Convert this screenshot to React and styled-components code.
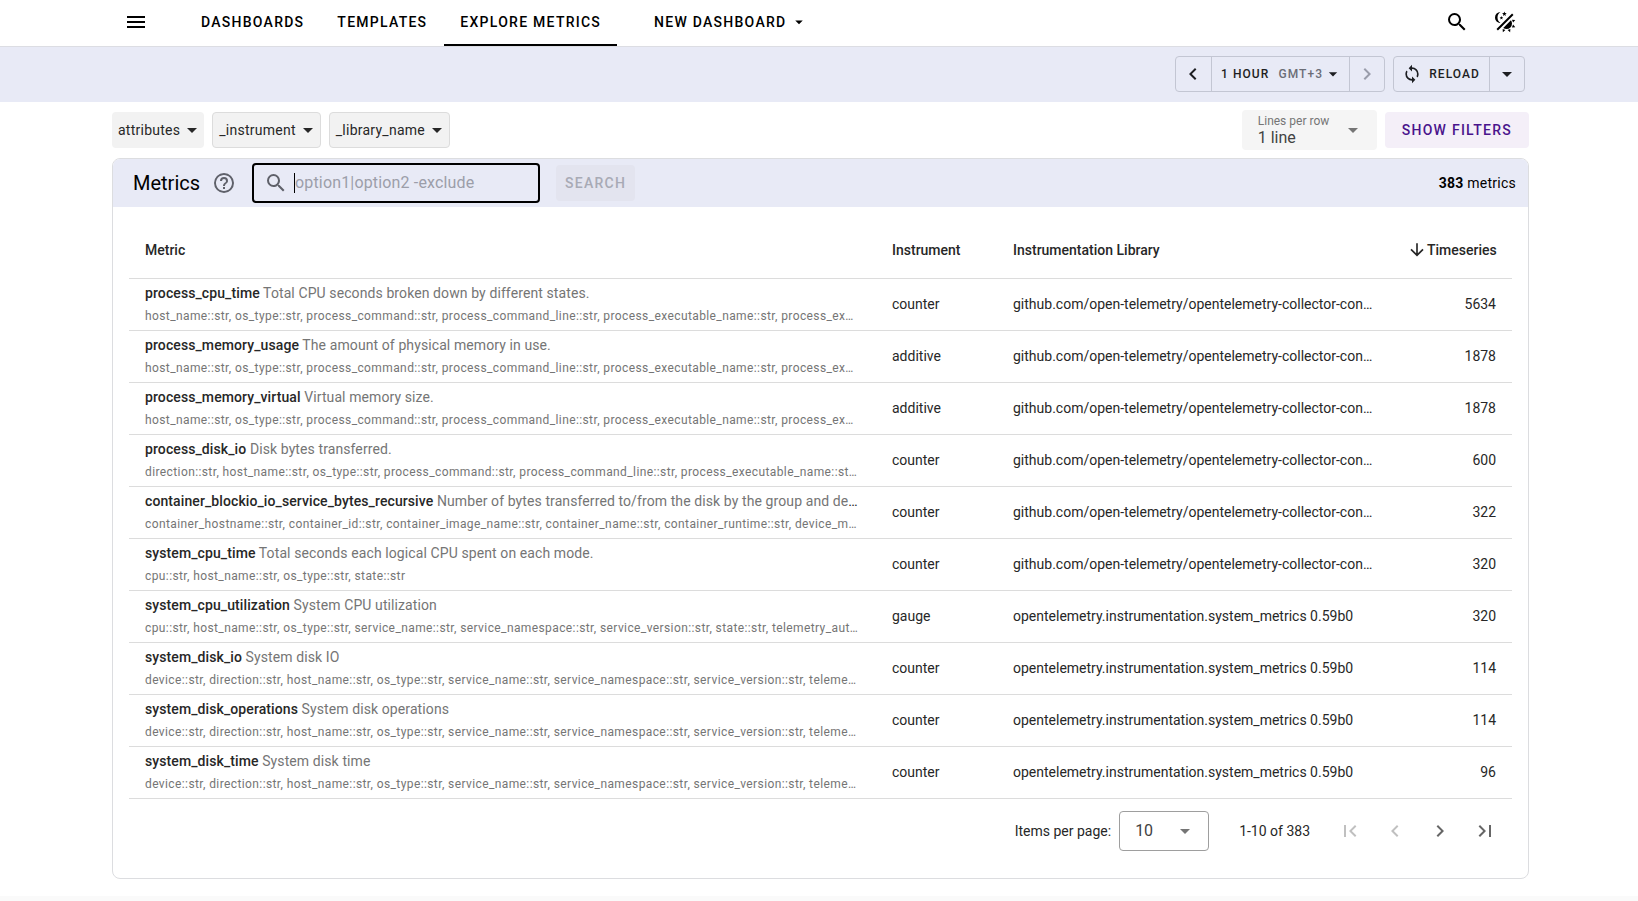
import React from 'react';
import styled, { createGlobalStyle } from 'styled-components';

const GlobalStyle = createGlobalStyle`
  *, *::before, *::after {
    box-sizing: border-box;
  }
  body {
    margin: 0;
    background: #fff;
    color: #272727;
    font-family: Roboto, sans-serif;
    font-size: 14px;
    line-height: 20px;
  }
  button, input, select {
    margin: 0;
    padding: 0;
    border: 0;
    background: none;
    color: inherit;
    font: inherit;
    letter-spacing: inherit;
  }
`

const icons = {
  menu: 'M3,6H21V8H3V6M3,11H21V13H3V11M3,16H21V18H3V16Z',
  magnify: 'M9.5,3A6.5,6.5 0 0,1 16,9.5C16,11.11 15.41,12.59 14.44,13.73L14.71,14H15.5L20.5,19L19,20.5L14,15.5V14.71L13.73,14.44C12.59,15.41 11.11,16 9.5,16A6.5,6.5 0 0,1 3,9.5A6.5,6.5 0 0,1 9.5,3M9.5,5C7,5 5,7 5,9.5C5,12 7,14 9.5,14C12,14 14,12 14,9.5C14,7 12,5 9.5,5Z',
  theme: 'M7.5,2C5.71,3.15 4.5,5.18 4.5,7.5C4.5,9.82 5.71,11.85 7.53,13C4.46,13 2,10.54 2,7.5A5.5,5.5 0 0,1 7.5,2M19.07,3.5L20.5,4.93L4.93,20.5L3.5,19.07L19.07,3.5M12.89,5.93L11.41,5L9.97,6L10.39,4.3L9,3.24L10.75,3.12L11.33,1.47L12,3.1L13.73,3.13L12.38,4.26L12.89,5.93M9.59,9.54L8.43,8.81L7.31,9.59L7.65,8.27L6.56,7.44L7.92,7.35L8.37,6.06L8.88,7.33L10.24,7.36L9.19,8.23L9.59,9.54M19,13.5A5.5,5.5 0 0,1 13.5,19C12.28,19 11.15,18.6 10.24,17.93L17.93,10.24C18.6,11.15 19,12.28 19,13.5M14.6,20.08L17.37,18.93L17.13,22.28L14.6,20.08M18.93,17.38L20.08,14.61L22.28,17.15L18.93,17.38M20.08,12.42L18.94,9.64L22.28,9.88L20.08,12.42M9.63,18.93L12.4,20.08L9.87,22.27L9.63,18.93Z',
  caret: 'M7,10L12,15L17,10H7Z',
  left: 'M15.41,16.58L10.83,12L15.41,7.41L14,6L8,12L14,18L15.41,16.58Z',
  right: 'M8.59,16.58L13.17,12L8.59,7.41L10,6L16,12L10,18L8.59,16.58Z',
  first: 'M18.41,16.59L13.82,12L18.41,7.41L17,6L11,12L17,18L18.41,16.59M6,6H8V18H6V6Z',
  last: 'M5.59,7.41L10.18,12L5.59,16.59L7,18L13,12L7,6L5.59,7.41M16,6H18V18H16V6Z',
  sync: 'M12,18A6,6 0 0,1 6,12C6,11 6.25,10.03 6.7,9.2L5.24,7.74C4.46,8.97 4,10.43 4,12A8,8 0 0,0 12,20V23L16,19L12,15M12,4V1L8,5L12,9V6A6,6 0 0,1 18,12C18,13 17.75,13.97 17.3,14.8L18.76,16.26C19.54,15.03 20,13.57 20,12A8,8 0 0,0 12,4Z',
  down: 'M11,4H13V16L18.5,10.5L19.92,11.92L12,19.84L4.08,11.92L5.5,10.5L11,16V4Z',
  help: 'M11,18H13V16H11V18M12,2A10,10 0 0,0 2,12A10,10 0 0,0 12,22A10,10 0 0,0 22,12A10,10 0 0,0 12,2M12,20C7.59,20 4,16.41 4,12C4,7.59 7.59,4 12,4C16.41,4 20,7.59 20,12C20,16.41 16.41,20 12,20M12,6A4,4 0 0,0 8,10H10A2,2 0 0,1 12,8A2,2 0 0,1 14,10C14,12 11,11.75 11,15H13C13,12.75 16,12.5 16,10A4,4 0 0,0 12,6Z',
}

const Svg = styled.svg`
  flex: none;
  display: block;
  fill: currentColor;
  pointer-events: none;
`

function Icon({ name, size = 24 }) {
  return (
    <Svg width={size} height={size} viewBox="0 0 24 24" aria-hidden="true">
      <path d={icons[name]} />
    </Svg>
  )
}

const Page = styled.div`
  display: flex;
  flex-direction: column;
  min-height: 100vh;
`

const TopBar = styled.header`
  display: flex;
  height: 47px;
  padding: 0 109px 0 112px;
  border-bottom: 1px solid #dcdde3;
  color: #000;
`

const IconButton = styled.button`
  display: flex;
  align-items: center;
  justify-content: center;
  width: 48px;
  height: 44px;
`

const Tabs = styled.nav`
  display: flex;
  flex: 1;
  gap: 1px;
  margin-left: 25px;
`

const Tab = styled.a`
  display: flex;
  align-items: center;
  padding: 0 16px;
  border-bottom: 2px solid ${props => props.$active ? '#000' : 'transparent'};
  color: #000;
  font-weight: 500;
  letter-spacing: 0.09em;
  text-decoration: none;
  text-transform: uppercase;
`

const NewDashboard = styled(Tab).attrs({ as: 'button' })`
  gap: 4px;
  margin-left: 20px;
`

const Band = styled.div`
  display: flex;
  justify-content: flex-end;
  gap: 8px;
  padding: 9px 113px 10px;
  background: #e8eaf6;
`

const Group = styled.div`
  display: flex;
  height: 36px;
  border: 1px solid #c3c6d3;
  border-radius: 4px;
`

const GroupButton = styled.button`
  display: flex;
  align-items: center;
  justify-content: center;
  min-width: 35px;
  padding: ${props => props.$pad || '0'};
  color: ${props => props.disabled ? '#9a9dab' : '#1d1e22'};
  font-size: 12px;
  font-weight: 500;
  letter-spacing: 0.09em;
  & + & {
    border-left: 1px solid #c3c6d3;
  }
`

const Zone = styled.span`
  margin-left: 9px;
  color: #6b6d76;
`

const ReloadText = styled.span`
  margin-left: 7px;
`

const Main = styled.main`
  padding: 8px 109px 17px 112px;
`

const Filters = styled.div`
  display: flex;
  align-items: center;
  gap: 8px;
`

const Chip = styled.button`
  display: flex;
  align-items: center;
  height: 36px;
  padding: 0 0 0 6px;
  border: ${props => props.$flat ? '0' : '1px solid #dcdcdc'};
  border-radius: 4px;
  background: #f2f2f2;
  letter-spacing: 0.018em;
`

const LinesField = styled.div`
  display: flex;
  align-items: center;
  width: 135px;
  height: 40px;
  margin-left: auto;
  padding: 0 12px 0 16px;
  border-radius: 4px;
  background: #f5f5f5;
  color: #757575;
`

const LinesText = styled.div`
  display: flex;
  flex-direction: column;
  flex: 1;
  min-width: 0;
  label {
    font-size: 12px;
    line-height: 15px;
  }
`

const Select = styled.select`
  flex: 1;
  min-width: 0;
  appearance: none;
  color: #424242;
  font-size: 16px;
  line-height: 18px;
`

const ShowFilters = styled.button`
  height: 36px;
  padding: 0 17px;
  border-radius: 4px;
  background: #f4eff8;
  color: #4a148c;
  font-weight: 500;
  letter-spacing: 0.09em;
`

const Card = styled.section`
  margin-top: 8px;
  border: 1px solid #dcdde0;
  border-radius: 8px;
  overflow: hidden;
`

const CardBar = styled.div`
  display: flex;
  align-items: center;
  height: 48px;
  padding: 0 12px 0 20px;
  background: #e8eaf6;
  color: #000;
`

const Title = styled.h1`
  margin: 0 12px 0 0;
  font-size: 20px;
  font-weight: 400;
`

const HelpButton = styled.button`
  color: #5f616a;
`

const SearchBox = styled.div`
  display: flex;
  align-items: center;
  gap: 6px;
  width: 288px;
  height: 40px;
  margin: 0 16px;
  padding: 0 10px;
  border: 2px solid #000;
  border-radius: 4px;
  color: #5f616a;
`

const SearchInput = styled.input`
  flex: 1;
  min-width: 0;
  height: 20px;
  border-left: 1px solid #000;
  outline: none;
  font-size: 16px;
  letter-spacing: 0.01em;
  &::placeholder {
    color: #9c9ea9;
    opacity: 1;
  }
`

const SearchButton = styled.button`
  height: 36px;
  padding: 0 9px;
  border-radius: 4px;
  background: #e3e4ef;
  color: #a8aab5;
  font-weight: 500;
  letter-spacing: 0.09em;
`

const Count = styled.div`
  margin-left: auto;
  letter-spacing: 0.018em;
`

const CardBody = styled.div`
  padding: 16px;
`

const Table = styled.table`
  width: 100%;
  table-layout: fixed;
  border-collapse: separate;
  border-spacing: 0;
`

const Th = styled.th`
  width: ${props => props.$width || 'auto'};
  height: 56px;
  padding: 0 16px 2px;
  border-bottom: 1px solid #dcdcdc;
  font-weight: 500;
  text-align: ${props => props.$end ? 'right' : 'left'};
`

const Sort = styled.button`
  display: inline-flex;
  align-items: center;
  vertical-align: middle;
`

const Td = styled.td`
  height: 52px;
  padding: 0 16px 2px;
  border-bottom: 1px solid #dcdcdc;
  overflow: hidden;
  text-align: ${props => props.$end ? 'right' : 'left'};
  text-overflow: ellipsis;
  white-space: nowrap;
`

const Name = styled.div`
  margin-bottom: 2px;
  overflow: hidden;
  text-overflow: ellipsis;
  line-height: 22px;
  letter-spacing: 0.007em;
  a {
    color: inherit;
    font-weight: 500;
    text-decoration: none;
  }
  span {
    color: #757575;
  }
`

const Attrs = styled.div`
  overflow: hidden;
  text-overflow: ellipsis;
  color: #757575;
  font-size: 12px;
  letter-spacing: 0.033em;
`

const Pager = styled.div`
  display: flex;
  align-items: center;
  justify-content: flex-end;
  padding: 12px 5px 11px;
`

const PageSize = styled.div`
  display: flex;
  align-items: center;
  width: 90px;
  height: 40px;
  margin: 0 30px 0 8px;
  padding: 0 11px 0 15px;
  border: 1px solid #9e9e9e;
  border-radius: 4px;
  color: #757575;
`

const Range = styled.span`
  margin-right: 17px;
`

const PageButton = styled.button`
  display: flex;
  justify-content: center;
  width: 45px;
  color: ${props => props.disabled ? '#c0c0c0' : '#666'};
`

const Footer = styled.footer`
  flex: 1;
  background: #fafafa;
`

const github = 'github.com/open-telemetry/opentelemetry-collector-contrib'
const system = 'opentelemetry.instrumentation.system_metrics 0.59b0'
const processAttrs = 'host_name, os_type, process_command, process_command_line, process_executable_name, process_exec'
const diskAttrs = 'device, direction, host_name, os_type, service_name, service_namespace, service_version, telemetry'

const metrics = [
  { name: 'process_cpu_time', text: 'Total CPU seconds broken down by different states.', attrs: processAttrs, instrument: 'counter', library: github, count: 5634 },
  { name: 'process_memory_usage', text: 'The amount of physical memory in use.', attrs: processAttrs, instrument: 'additive', library: github, count: 1878 },
  { name: 'process_memory_virtual', text: 'Virtual memory size.', attrs: processAttrs, instrument: 'additive', library: github, count: 1878 },
  { name: 'process_disk_io', text: 'Disk bytes transferred.', attrs: 'direction, host_name, os_type, process_command, process_command_line, process_executable_name, process_exec', instrument: 'counter', library: github, count: 600 },
  { name: 'container_blockio_io_service_bytes_recursive', text: 'Number of bytes transferred to/from the disk by the group and descend', attrs: 'container_hostname, container_id, container_image_name, container_name, container_runtime, device_major', instrument: 'counter', library: github, count: 322 },
  { name: 'system_cpu_time', text: 'Total seconds each logical CPU spent on each mode.', attrs: 'cpu, host_name, os_type, state', instrument: 'counter', library: github, count: 320 },
  { name: 'system_cpu_utilization', text: 'System CPU utilization', attrs: 'cpu, host_name, os_type, service_name, service_namespace, service_version, state, telemetry_auto', instrument: 'gauge', library: system, count: 320 },
  { name: 'system_disk_io', text: 'System disk IO', attrs: diskAttrs, instrument: 'counter', library: system, count: 114 },
  { name: 'system_disk_operations', text: 'System disk operations', attrs: diskAttrs, instrument: 'counter', library: system, count: 114 },
  { name: 'system_disk_time', text: 'System disk time', attrs: diskAttrs, instrument: 'counter', library: system, count: 96 },
]

const withTypes = attrs => attrs.split(', ').map(attr => attr + '::str').join(', ')

function MetricRow({ metric }) {
  return (
    <tr>
      <Td>
        <Name>
          <a href="#metric">{metric.name}</a> <span>{metric.text}</span>
        </Name>
        <Attrs>{withTypes(metric.attrs)}</Attrs>
      </Td>
      <Td>{metric.instrument}</Td>
      <Td>{metric.library}</Td>
      <Td $end>{metric.count}</Td>
    </tr>
  )
}

export default function App() {
  return (
    <Page>
      <GlobalStyle />
      <TopBar>
        <IconButton aria-label="Menu"><Icon name="menu" /></IconButton>
        <Tabs>
          <Tab href="#dashboards">Dashboards</Tab>
          <Tab href="#templates">Templates</Tab>
          <Tab href="#explore" $active>Explore metrics</Tab>
          <NewDashboard>New dashboard <Icon name="caret" size={18} /></NewDashboard>
        </Tabs>
        <IconButton aria-label="Search"><Icon name="magnify" /></IconButton>
        <IconButton aria-label="Toggle theme"><Icon name="theme" /></IconButton>
      </TopBar>

      <Band>
        <Group>
          <GroupButton aria-label="Previous period"><Icon name="left" /></GroupButton>
          <GroupButton $pad="0 6px 0 9px">
            1 HOUR <Zone>GMT+3</Zone> <Icon name="caret" size={20} />
          </GroupButton>
          <GroupButton aria-label="Next period" disabled><Icon name="right" /></GroupButton>
        </Group>
        <Group>
          <GroupButton $pad="0 9px 0 8px"><Icon name="sync" size={20} /><ReloadText>RELOAD</ReloadText></GroupButton>
          <GroupButton aria-label="Reload options"><Icon name="caret" /></GroupButton>
        </Group>
      </Band>

      <Main>
        <Filters>
          <Chip $flat>attributes <Icon name="caret" /></Chip>
          <Chip>_instrument <Icon name="caret" /></Chip>
          <Chip>_library_name <Icon name="caret" /></Chip>
          <LinesField>
            <LinesText>
              <label htmlFor="lines">Lines per row</label>
              <Select id="lines"><option>1 line</option></Select>
            </LinesText>
            <Icon name="caret" />
          </LinesField>
          <ShowFilters>SHOW FILTERS</ShowFilters>
        </Filters>

        <Card>
          <CardBar>
            <Title>Metrics</Title>
            <HelpButton aria-label="Help"><Icon name="help" /></HelpButton>
            <SearchBox>
              <Icon name="magnify" />
              <SearchInput aria-label="Search metrics" placeholder="option1|option2 -exclude" />
            </SearchBox>
            <SearchButton disabled>SEARCH</SearchButton>
            <Count><b>383</b> metrics</Count>
          </CardBar>
          <CardBody>
            <Table>
              <thead>
                <tr>
                  <Th>Metric</Th>
                  <Th $width="121px">Instrument</Th>
                  <Th $width="394px">Instrumentation Library</Th>
                  <Th $width="121px" $end>
                    <Sort><Icon name="down" size={20} />Timeseries</Sort>
                  </Th>
                </tr>
              </thead>
              <tbody>
                {metrics.map(metric => <MetricRow key={metric.name} metric={metric} />)}
              </tbody>
            </Table>
            <Pager>
              <label htmlFor="size">Items per page:</label>
              <PageSize>
                <Select id="size"><option>10</option></Select>
                <Icon name="caret" />
              </PageSize>
              <Range>1-10 of 383</Range>
              <PageButton aria-label="First page" disabled><Icon name="first" /></PageButton>
              <PageButton aria-label="Previous page" disabled><Icon name="left" /></PageButton>
              <PageButton aria-label="Next page"><Icon name="right" /></PageButton>
              <PageButton aria-label="Last page"><Icon name="last" /></PageButton>
            </Pager>
          </CardBody>
        </Card>
      </Main>
      <Footer />
    </Page>
  )
}
